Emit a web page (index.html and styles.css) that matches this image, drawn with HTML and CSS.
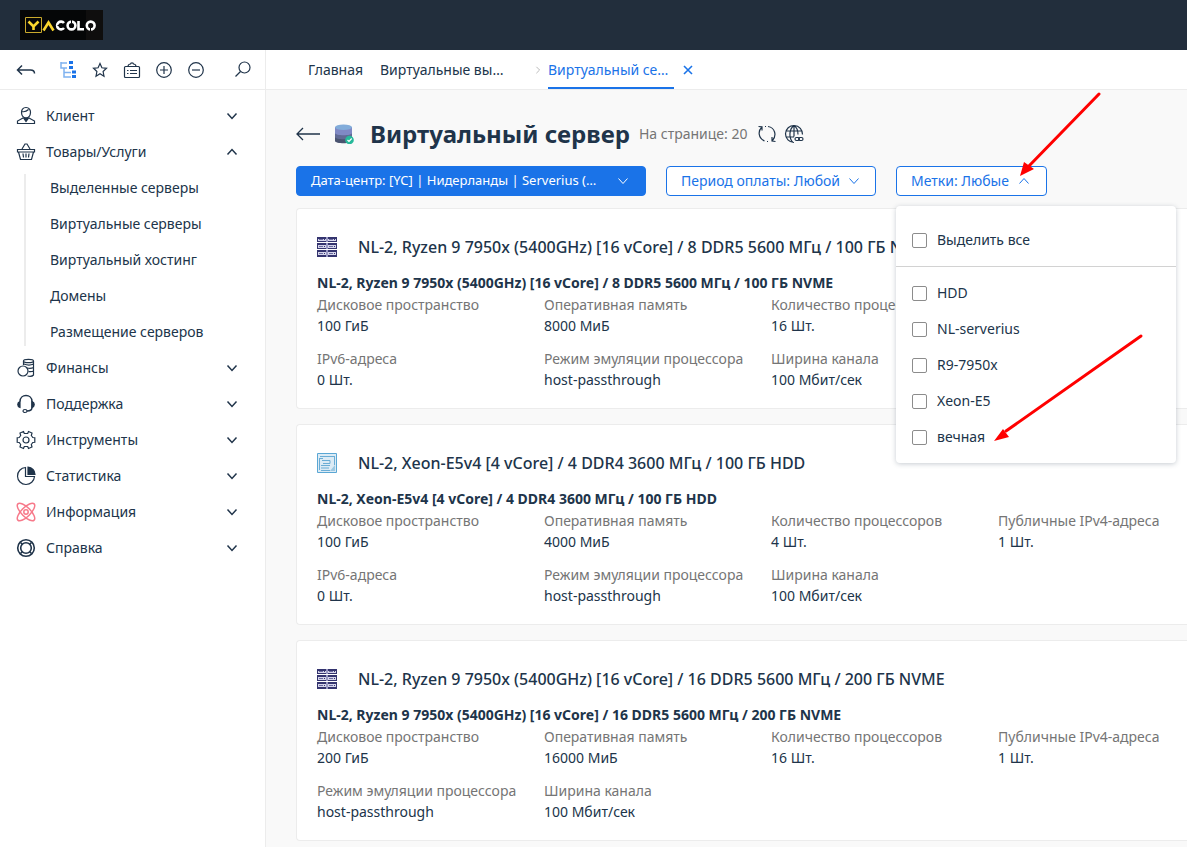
FILE: index.html
```html
<!DOCTYPE html>
<html lang="ru">
<head>
<meta charset="utf-8">
<title>Виртуальный сервер</title>
<link rel="stylesheet" href="styles.css">
</head>
<body>
<svg class="defs" aria-hidden="true">
  <symbol id="chev" viewBox="0 0 12 12"><path d="M1.500 3.500 6 8.500l4.500-5"/></symbol>
  <symbol id="rack" viewBox="0 0 20 20">
    <path fill="#34346f" d="M0 0h20v20H0z"/>
    <path fill="#9a9ac4" d="M9 0h2v20H9z"/>
    <path fill="#fff" d="M0 5h20v1H0zM0 12h20v1H0z"/>
    <path fill="#d5d5ea" d="M1 2h8v2H1zM11 2h8v2h-8zM1 8h8v3H1zM11 8h8v3h-8zM1 15h8v3H1zM11 15h8v3h-8z"/>
    <path fill="#6b6ba0" d="M2 2h4v1H2zM12 2h4v1h-4zM2 9h4v1H2zM12 9h4v1h-4zM2 16h4v1H2zM12 16h4v1h-4z"/>
    <path fill="#34346f" d="M7 2h1v1H7zM17 2h1v1h-1zM7 9h1v1H7zM17 9h1v1h-1zM7 16h1v1H7zM17 16h1v1h-1z"/>
  </symbol>
</svg>
<header class="topbar">
  <svg class="logo" viewBox="0 0 83 30" role="img" aria-label="Yacolo">
    <path fill="#050607" d="M0 0h83v30H0z"/><path fill="#0f0e0e" d="M66 0h17v30H66z"/>
    <path fill="none" stroke="#c9a92c" d="M5.500 7.500h16v15h-16z"/>
    <path fill="none" stroke="#fbd72e" stroke-width="2.600" d="m8.500 11.500 5 5 5-5M13.500 16v4M23.500 20.500l5-8 5 8"/>
    <g fill="none" stroke="#fff" stroke-width="2.600"><path d="M44 13a3.900 3.900 0 1 0 0 5M58.500 11v8.300h5.500"/><circle cx="51.500" cy="15.500" r="3.900"/><circle cx="70.700" cy="15.500" r="3.900"/></g>
    <path stroke="#050607" d="M51.500 10v3M70.500 18v3M37.500 15.500h4"/>
  </svg>
</header>
<div class="shell">
  <aside class="sidebar">
    <div class="tools">
      <button class="tool back" aria-label="Назад"><svg class="ico" viewBox="0 0 20 20"><path stroke-width="1.500" d="M6 5.500 1.500 10 6 14.500M2 10h12.500q4 0 4 3.500"/></svg></button>
      <button class="tool" aria-label="Дерево"><svg class="ico" viewBox="0 0 20 20"><g stroke="#7fb2f0" stroke-width="1.500"><path d="M3 2v6h6M3 3h6M6 8v9h7M6 12.500h7"/></g><path fill="#1a73e8" stroke="none" d="M11 1h4v3h-4zM11 6h4v3h-4zM14 10.500h4v3h-4zM14 15h4v3h-4z"/></svg></button>
      <button class="tool" aria-label="Избранное"><svg class="ico" viewBox="0 0 20 20"><path d="m10 3.500 1.900 4.300 4.600.5-3.400 3.200.9 4.700-4-2.400-4 2.400.9-4.700-3.400-3.200 4.600-.5z"/></svg></button>
      <button class="tool" aria-label="Журнал"><svg class="ico" viewBox="0 0 20 20"><rect x="2.500" y="6.500" width="15" height="11" rx="1"/><path d="M6 6.500c0-2 2-2.500 2.500-2.500 0-1.500 3-1.500 3 0 .5 0 2.500.5 2.500 2.500M8 10.500h7M8 13.500h7M5 10.500h1.500M5 13.500h1.500"/></svg></button>
      <button class="tool" aria-label="Развернуть"><svg class="ico" viewBox="0 0 20 20"><circle cx="10" cy="10" r="7.300"/><path d="M10 6v8M6 10h8"/></svg></button>
      <button class="tool" aria-label="Свернуть"><svg class="ico" viewBox="0 0 20 20"><circle cx="10" cy="10" r="7.300"/><path d="M6 10h8"/></svg></button>
      <button class="tool search" aria-label="Поиск"><svg class="ico" viewBox="0 0 20 20"><circle cx="11.500" cy="7.500" r="5.500"/><path d="M7.500 11.500 2.500 16.500"/></svg></button>
    </div>
    <nav class="menu">
      <button class="item"><svg class="ico" viewBox="0 0 20 20"><path d="M10 1.500c-6.500 0-5.500 10 0 10.500 5.500-.5 6.500-10.500 0-10.500zM5.500 5.500c4 1 6-1 7-2M7 12 1.500 15v2.500h17V15L13 12"/><path fill="#20344a" d="m7.500 12 2.500 3.500 2.500-3.500z"/></svg><span>Клиент</span><svg class="chev"><use href="#chev"/></svg></button>
      <button class="item"><svg class="ico" viewBox="0 0 20 20"><path d="M1.500 7.500h17V10h-17zM2.500 10l2 7.500h11l2-7.500M6 7l3-5h2l3 5M7 11.500l.5 4M10 11.500v4M13 11.500l-.5 4"/></svg><span>Товары/Услуги</span><svg class="chev up"><use href="#chev"/></svg></button>
      <div class="sub">
        <a href="#">Выделенные серверы</a>
        <a href="#">Виртуальные серверы</a>
        <a href="#">Виртуальный хостинг</a>
        <a href="#">Домены</a>
        <a href="#">Размещение серверов</a>
      </div>
      <button class="item"><svg class="ico" viewBox="0 0 20 20"><ellipse cx="12.500" cy="3" rx="5" ry="1.700"/><path d="M7.500 3v4M17.500 3v14c-1 1.200-4 1.500-6 1M8 6q5 2.200 9.500 0M11 10q4 .8 6.500-.5M12.500 13.500q3 .5 5-.5"/><circle cx="7" cy="13" r="5"/></svg><span>Финансы</span><svg class="chev"><use href="#chev"/></svg></button>
      <button class="item"><svg class="ico" viewBox="0 0 20 20"><path d="M4 7.500c0-8 12-8 12 0v6q0 3.500-5 3.500" stroke-width="1.500"/><path fill="#20344a" d="M4 7.500v6C1 12.500 1 8.500 4 7.500zM16 7.500v6c3-1 3-5 0-6z"/><ellipse cx="9" cy="17" rx="2" ry="1.500"/></svg><span>Поддержка</span><svg class="chev"><use href="#chev"/></svg></button>
      <button class="item"><svg class="ico" viewBox="0 0 20 20"><path d="m7.500 1.500.8 2h3.400l.8-2 3.500 1.500-.7 2.500 1.500 2 2 .2v4.600l-2 .2-1.500 2 .7 2.500-3.500 1.500-.8-2H8.300l-.8 2L4 17l.7-2.500-1.500-2-2-.2V7.700l2-.2 1.500-2L4 3z"/><circle cx="10" cy="10" r="3"/></svg><span>Инструменты</span><svg class="chev"><use href="#chev"/></svg></button>
      <button class="item"><svg class="ico" viewBox="0 0 20 20"><path d="M9.500 1.500a8.500 8.500 0 1 0 9 9h-9z"/><path fill="#20344a" d="M12 1.200v7.300h7c0-4-3-7-7-7.300z"/></svg><span>Статистика</span><svg class="chev"><use href="#chev"/></svg></button>
      <button class="item"><svg class="ico atom" viewBox="0 0 20 20"><ellipse cx="10" cy="10" rx="11.500" ry="4.500" transform="rotate(45 10 10)"/><ellipse cx="10" cy="10" rx="11.500" ry="4.500" transform="rotate(-45 10 10)"/><circle cx="10" cy="10" r="2.200"/></svg><span>Информация</span><svg class="chev"><use href="#chev"/></svg></button>
      <button class="item"><svg class="ico" viewBox="0 0 20 20"><circle cx="10" cy="10" r="8.300" stroke-width="1.600"/><circle cx="10" cy="10" r="5.300" stroke-width="1.600"/><path d="m4.500 4.500 2 2M15.500 4.500l-2 2M4.500 15.500l2-2M15.500 15.500l-2-2" stroke-width="1.600"/></svg><span>Справка</span><svg class="chev"><use href="#chev"/></svg></button>
    </nav>
  </aside>
  <main class="main">
    <nav class="tabs">
      <a href="#" class="tab home">Главная</a>
      <a href="#" class="tab parent">Виртуальные вы…</a>
      <svg class="sep" viewBox="0 0 6 10"><path d="m1 1 4 4-4 4"/></svg>
      <a href="#" class="tab active">Виртуальный се…</a>
      <button class="close" aria-label="Закрыть"><svg viewBox="0 0 10 10"><path d="m1 1 8 8M9 1 1 9"/></svg></button>
    </nav>
    <div class="content">
      <div class="heading">
        <button class="goback" aria-label="Назад"><svg viewBox="0 0 24 14"><path d="M7 1 1 7l6 6M1 7h23"/></svg></button>
        <svg class="db" viewBox="0 0 20 20"><path fill="#4a5470" d="M1 12h17v5c0 3-17 3-17 0z"/><path fill="#616a94" d="M1 8h17v5c0 3-17 3-17 0z"/><path fill="#8089c4" d="M1 3h17v6c0 3-17 3-17 0z"/><ellipse cx="9.500" cy="3.200" rx="8.500" ry="2.800" fill="#82acda"/><circle cx="15.500" cy="16" r="4.300" fill="#26b99a"/><path d="m13.500 16 1.500 1.500 2.700-3" fill="none" stroke="#fff" stroke-width="1.200"/></svg>
        <h1>Виртуальный сервер</h1>
        <span class="perpage">На странице: 20</span>
        <button class="hbtn" aria-label="Обновить"><svg class="ico" viewBox="0 0 20 20"><path d="M4.500 3.500C1 7 1 14 7.500 17M1.500 2.500l3.500.3v3.700M11 2.500c7 1 9 9 4.500 14M18.500 17.500 15 17v-4M8 2.500h1M10 17.500h1"/></svg></button>
        <button class="hbtn" aria-label="Ссылка"><svg class="ico" viewBox="0 0 20 20"><path d="M10 18.500a8.500 8.500 0 1 1 8.500-8M2 7h16M2 13h8M10 1.500v11M10 1.500C5 5 4.500 14 9 18.500M10 1.500c3 2 4 5 4 9"/><rect x="11" y="13.500" width="4.500" height="3" rx="1.500"/><rect x="14.500" y="13.500" width="4.500" height="3" rx="1.500"/></svg></button>
      </div>
      <div class="filters">
        <button class="filter solid"><span>Дата-центр: [YC] | Нидерланды | Serverius (…</span><svg class="chev thin"><use href="#chev"/></svg></button>
        <button class="filter period"><span>Период оплаты: Любой</span><svg class="chev thin"><use href="#chev"/></svg></button>
        <div class="dropdown">
          <button class="filter tags" aria-expanded="true"><span>Метки: Любые</span><svg class="chev thin up"><use href="#chev"/></svg></button>
          <div class="panel">
            <div class="group all"><label><input type="checkbox"><span>Выделить все</span></label></div>
            <div class="group">
              <label><input type="checkbox"><span>HDD</span></label>
              <label><input type="checkbox"><span>NL-serverius</span></label>
              <label><input type="checkbox"><span>R9-7950x</span></label>
              <label><input type="checkbox"><span>Xeon-E5</span></label>
              <label><input type="checkbox"><span>вечная</span></label>
            </div>
          </div>
        </div>
      </div>
      <section class="card">
        <h2><svg class="pic"><use href="#rack"/></svg>NL-2, Ryzen 9 7950x (5400GHz) [16 vCore] / 8 DDR5 5600 МГц / 100 ГБ NVME</h2>
        <p class="name">NL-2, Ryzen 9 7950x (5400GHz) [16 vCore] / 8 DDR5 5600 МГц / 100 ГБ NVME</p>
        <dl>
          <div><dt>Дисковое пространство</dt><dd>100 ГиБ</dd></div>
          <div><dt>Оперативная память</dt><dd>8000 МиБ</dd></div>
          <div class="last"><dt>Количество процессоров</dt><dd>16 Шт.</dd></div>
          <div><dt>IPv6-адреса</dt><dd>0 Шт.</dd></div>
          <div><dt>Режим эмуляции процессора</dt><dd>host-passthrough</dd></div>
          <div><dt>Ширина канала</dt><dd>100 Мбит/сек</dd></div>
        </dl>
      </section>
      <section class="card">
        <h2><svg class="pic" viewBox="0 0 20 20"><path fill="#dcebf5" stroke="#5aa7d4" d="M.5.500h19v19H.5z"/><path fill="none" stroke="#6badd5" d="M3 3.500h14M17.500 3v9M2.500 5v12M4 17.500h9M5 7.500h8v3H6M4 12.500h9M4 15h8M3 5.500h3"/><path fill="#9cc8e2" d="m13 18 5-6v6z"/></svg>NL-2, Xeon-E5v4 [4 vCore] / 4 DDR4 3600 МГц / 100 ГБ HDD</h2>
        <p class="name">NL-2, Xeon-E5v4 [4 vCore] / 4 DDR4 3600 МГц / 100 ГБ HDD</p>
        <dl>
          <div><dt>Дисковое пространство</dt><dd>100 ГиБ</dd></div>
          <div><dt>Оперативная память</dt><dd>4000 МиБ</dd></div>
          <div><dt>Количество процессоров</dt><dd>4 Шт.</dd></div>
          <div><dt>Публичные IPv4-адреса</dt><dd>1 Шт.</dd></div>
          <div><dt>IPv6-адреса</dt><dd>0 Шт.</dd></div>
          <div><dt>Режим эмуляции процессора</dt><dd>host-passthrough</dd></div>
          <div><dt>Ширина канала</dt><dd>100 Мбит/сек</dd></div>
        </dl>
      </section>
      <section class="card">
        <h2><svg class="pic"><use href="#rack"/></svg>NL-2, Ryzen 9 7950x (5400GHz) [16 vCore] / 16 DDR5 5600 МГц / 200 ГБ NVME</h2>
        <p class="name">NL-2, Ryzen 9 7950x (5400GHz) [16 vCore] / 16 DDR5 5600 МГц / 200 ГБ NVME</p>
        <dl>
          <div><dt>Дисковое пространство</dt><dd>200 ГиБ</dd></div>
          <div><dt>Оперативная память</dt><dd>16000 МиБ</dd></div>
          <div><dt>Количество процессоров</dt><dd>16 Шт.</dd></div>
          <div><dt>Публичные IPv4-адреса</dt><dd>1 Шт.</dd></div>
          <div><dt>Режим эмуляции процессора</dt><dd>host-passthrough</dd></div>
          <div><dt>Ширина канала</dt><dd>100 Мбит/сек</dd></div>
        </dl>
      </section>
    </div>
  </main>
</div>
<svg class="arrows" viewBox="0 0 130 360" aria-hidden="true">
  <g stroke="#f00" stroke-width="3" stroke-linecap="round"><path d="M109 4 38 77M151 246 16 341"/></g>
  <path fill="#f00" d="m30 86 4-14 10 7zM4 351l9-12 6 8z"/>
</svg>
</body>
</html>
```
FILE: styles.css
```css
* { box-sizing: border-box; }
body {
  margin: 0;
  height: 100vh;
  display: flex;
  flex-direction: column;
  overflow: hidden;
  position: relative;
  background: #f9f9f9;
  color: #20344a;
  font: 14px/21px "Noto Sans", sans-serif;
}
button { font: inherit; color: inherit; background: none; border: 0; padding: 0; cursor: pointer; }
a { color: inherit; text-decoration: none; }
svg { flex: none; display: block; }
.defs { position: absolute; width: 0; height: 0; }
.topbar { flex: none; height: 50px; padding: 10px 20px; background: #222e3c; }
.logo { width: 83px; height: 30px; }
.shell { flex: 1; min-height: 0; display: flex; }
.ico { width: 20px; height: 20px; fill: none; stroke: #20344a; stroke-width: 1.2; }
.chev { width: 12px; height: 12px; fill: none; stroke: #20344a; stroke-width: 1.5; }
.chev.up { transform: rotate(180deg); }
.chev.thin { stroke: currentColor; stroke-width: 1; }

.sidebar { flex: none; width: 266px; background: #fff; border-right: 1px solid #ececec; }
.tools { display: flex; gap: 12px; height: 40px; padding: 0 12px 0 16px; align-items: center; border-bottom: 1px solid #ececec; }
.tool.back { margin-right: 10px; }
.tool.search { margin-left: auto; }
.menu { padding-top: 8px; }
.item { display: flex; align-items: center; gap: 10px; width: 100%; height: 36px; padding: 0 27px 0 16px; text-align: left; }
.item span { flex: 1; padding-bottom: 2px; }
.atom { stroke: #f7798a; stroke-width: 1.5; }
.sub { display: flex; flex-direction: column; gap: 8px; margin: 4px 0 4px 24px; border-left: 2px solid #ececec; padding-left: 24px; }
.sub a { line-height: 28px; }

.main { flex: 1; min-width: 0; overflow: hidden; }
.tabs { display: flex; align-items: center; height: 40px; padding-left: 42px; background: #fff; border-bottom: 1px solid #ececec; }
.tab { padding-top: 2px; line-height: 35px; border-bottom: 2px solid transparent; white-space: nowrap; }
.tab.home { width: 72px; }
.tab.parent { width: 155px; }
.tab.active { width: 126px; color: #1a73e8; border-color: #1a73e8; }
.sep { width: 6px; height: 8px; margin-right: 7px; fill: none; stroke: #aaa; }
.close { margin-left: 9px; }
.close svg { width: 10px; height: 10px; fill: none; stroke: #1a73e8; stroke-width: 1.6; }
.content { padding: 24px 0 0 30px; }
.heading { display: flex; align-items: center; height: 40px; margin-bottom: 12px; }
.goback svg { width: 24px; height: 14px; fill: none; stroke: #20344a; stroke-width: 1.3; }
.db { width: 20px; height: 20px; margin: 0 16px 0 14px; }
h1 { margin: 0 9px 0 0; font-size: 24px; line-height: 32px; font-weight: 700; white-space: nowrap; }
.perpage { color: #757575; margin-right: 10px; padding-bottom: 2px; white-space: nowrap; }
.hbtn { margin-right: 7px; }
.filters { display: flex; gap: 20px; margin-bottom: 12px; }
.filter {
  display: flex; align-items: center; justify-content: space-between; gap: 8px;
  height: 30px; padding: 0 16px 0 14px;
  border: 1px solid #1a73e8; border-radius: 4px;
  background: #fff; color: #1a73e8; white-space: nowrap;
}
.filter span, .panel span { padding-bottom: 2px; }
.filter.solid { width: 350px; background: #1a73e8; color: #fff; font-size: 13px; }
.filter.period { width: 210px; }
.filter.tags { width: 151px; }
.dropdown { position: relative; }
.panel {
  position: absolute; top: 40px; left: 0; width: 280px; z-index: 2;
  background: #fff; border-radius: 4px; box-shadow: 0 1px 5px rgba(32, 52, 74, .25);
}
.group { padding: 8px 16px; }
.group.all { padding-top: 16px; border-bottom: 1px solid #d2d2d2; }
.panel label { display: flex; align-items: center; gap: 10px; height: 36px; }
.panel input { appearance: none; width: 15px; height: 15px; margin: 0; border: 1px solid #8c8c8c; border-radius: 2px; background: #fff; }

.card { padding: 18px 0 18px 20px; margin-bottom: 15px; background: #fff; border: 1px solid #ececec; border-right: 0; border-radius: 4px 0 0 4px; }
h2 { display: flex; align-items: center; gap: 21px; height: 40px; margin: 0 0 5px; font-size: 16px; font-weight: 500; white-space: nowrap; }
.pic { width: 20px; height: 20px; }
.name { margin: 0; line-height: 22px; font-weight: 700; white-space: nowrap; }
dl { margin: 0; display: grid; grid-template-columns: repeat(4, minmax(227px, 1fr)); row-gap: 12px; white-space: nowrap; }
.last { grid-column: span 2; }
dt { color: #757575; }
dd { margin: 0; }
.arrows { position: absolute; left: 990px; top: 90px; width: 130px; height: 360px; overflow: visible; z-index: 3; pointer-events: none; }
```
